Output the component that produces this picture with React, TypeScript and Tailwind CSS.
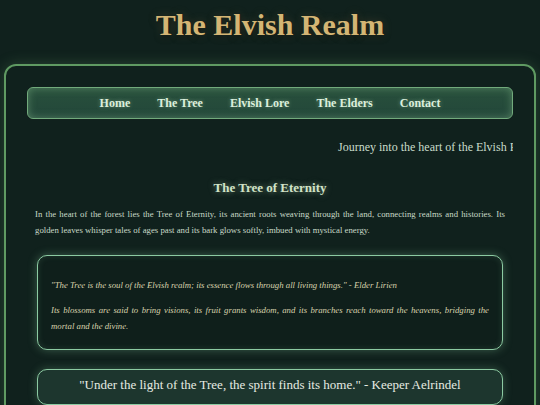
const links = ["Home", "The Tree", "Elvish Lore", "The Elders", "Contact"];

export default function App() {
  return (
    <div className="h-[405px] overflow-hidden bg-[#10211d] [font-family:'Liberation_Serif','Times_New_Roman',serif]">
      <header className="h-[64px] pt-[8px]">
        <h1 className="text-center text-[30px] font-bold leading-[34px] text-[#d4b574] [text-shadow:0_2px_6px_rgba(0,0,0,0.6),0_0_10px_rgba(212,181,116,0.25)]">
          The Elvish Realm
        </h1>
      </header>

      <main className="mx-1 rounded-[12px] border-2 border-[#5f9a62] px-[21px] pt-[21px] pb-6 shadow-[0_0_14px_rgba(110,170,110,0.25)]">
        {/* Navigation */}
        <nav className="flex h-[32px] items-center justify-center gap-[27px] rounded-[6px] border border-[#72ab7c] bg-gradient-to-b from-[#28503c] to-[#23473a] shadow-[inset_0_0_8px_rgba(170,230,170,0.35)]">
          {links.map((l) => (
            <a key={l} className="text-[12px] font-bold text-[#dcefdc] [text-shadow:0_0_4px_rgba(200,240,200,0.4)]">
              {l}
            </a>
          ))}
        </nav>

        {/* Marquee */}
        <div className="mt-[20px] overflow-hidden whitespace-nowrap pl-[311px] text-[12px] leading-[16px] text-[#c9dccb]">
          Journey into the heart of the Elvish Realm, where ancient magic lives on.
        </div>

        <section className="mt-[25px]">
          <h2 className="text-center text-[13px] font-bold leading-[16px] text-[#d2e4c8] [text-shadow:0_0_6px_rgba(200,230,190,0.5)]">
            The Tree of Eternity
          </h2>
          <p className="mx-2 mt-[10px] text-justify text-[8.75px] leading-[16px] text-[#c8dac8]">
            In the heart of the forest lies the Tree of Eternity, its ancient roots weaving through the land,
            connecting realms and histories. Its golden leaves whisper tales of ages past and its bark glows
            softly, imbued with mystical energy.
          </p>

          <div className="mx-[10px] mt-[17px] rounded-[10px] border-[1.5px] border-[#8ccaa2] bg-[#0f1f1b] px-[13px] pt-[21px] pb-[15px] shadow-[0_0_10px_rgba(140,210,160,0.35),inset_0_0_6px_rgba(140,210,160,0.15)]">
            <p className="text-[8.75px] italic leading-[16px] text-[#d8d2ac]">
              "The Tree is the soul of the Elvish realm; its essence flows through all living things." - Elder Lirien
            </p>
            <p className="mt-[8.5px] text-justify text-[8.75px] italic leading-[16px] text-[#d8d2ac]">
              Its blossoms are said to bring visions, its fruit grants wisdom, and its branches reach toward the
              heavens, bridging the mortal and the divine.
            </p>
          </div>

          <div className="mx-[10px] mt-[19px] rounded-[10px] border-[1.5px] border-[#8ccaa2] bg-[#1d362e] pt-[6.5px] pb-[10px] text-center text-[13px] leading-[18px] text-[#e6ebe2] shadow-[0_0_10px_rgba(140,210,160,0.3)]">
            "Under the light of the Tree, the spirit finds its home." - Keeper Aelrindel
          </div>
        </section>
      </main>
    </div>
  );
}
